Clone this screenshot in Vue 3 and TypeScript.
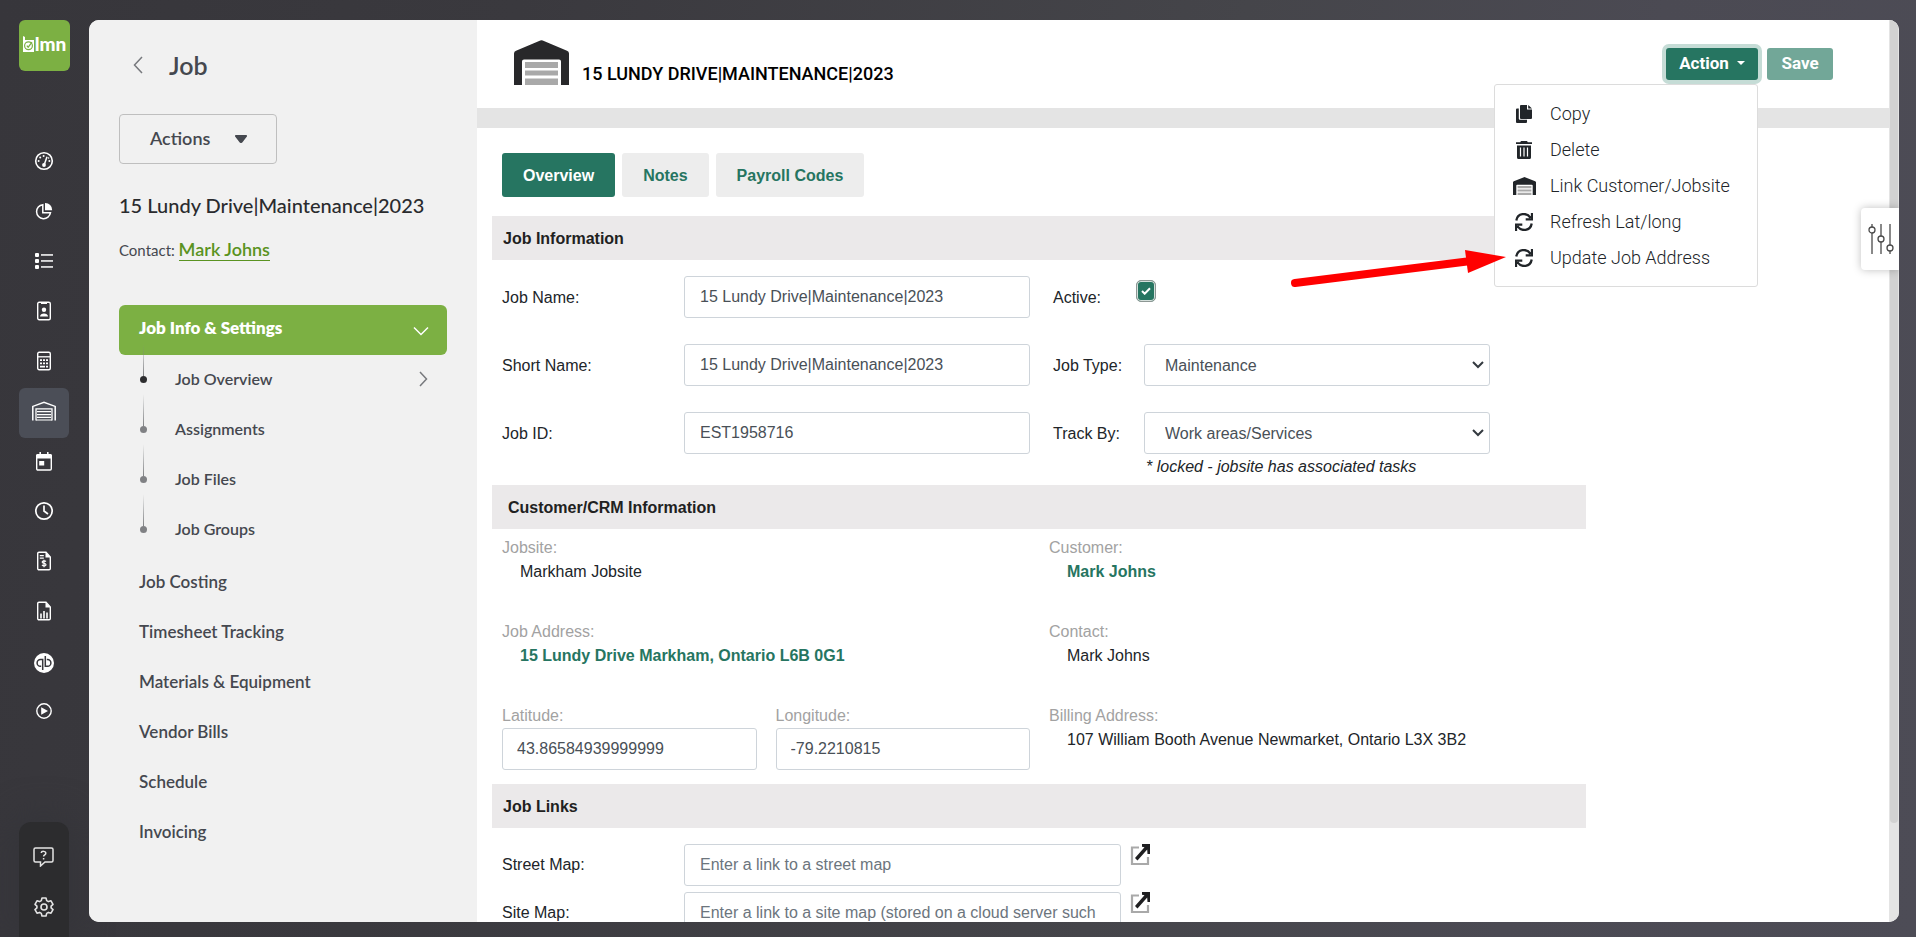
<script setup lang="ts">
import { ref } from 'vue'

type NavIcon =
  | 'gauge' | 'pie' | 'list' | 'badge' | 'calc' | 'barn'
  | 'calendar' | 'clock' | 'bill' | 'report' | 'qb' | 'play'

const navItems: { icon: NavIcon; label: string }[] = [
  { icon: 'gauge', label: 'Dashboard' },
  { icon: 'pie', label: 'Budgets' },
  { icon: 'list', label: 'Lists' },
  { icon: 'badge', label: 'Contacts' },
  { icon: 'calc', label: 'Estimates' },
  { icon: 'barn', label: 'Jobs' },
  { icon: 'calendar', label: 'Calendar' },
  { icon: 'clock', label: 'Timesheets' },
  { icon: 'bill', label: 'Invoices' },
  { icon: 'report', label: 'Reports' },
  { icon: 'qb', label: 'QuickBooks' },
  { icon: 'play', label: 'Videos' },
]

const subItems = ['Job Overview', 'Assignments', 'Job Files', 'Job Groups']
const sections = ['Job Costing', 'Timesheet Tracking', 'Materials & Equipment', 'Vendor Bills', 'Schedule', 'Invoicing']
const tabs = ['Overview', 'Notes', 'Payroll Codes']

type MenuIcon = 'copy' | 'trash' | 'barn' | 'sync'
const menuItems: { icon: MenuIcon; label: string }[] = [
  { icon: 'copy', label: 'Copy' },
  { icon: 'trash', label: 'Delete' },
  { icon: 'barn', label: 'Link Customer/Jobsite' },
  { icon: 'sync', label: 'Refresh Lat/long' },
  { icon: 'sync', label: 'Update Job Address' },
]

const jobName = ref('15 Lundy Drive|Maintenance|2023')
const shortName = ref('15 Lundy Drive|Maintenance|2023')
const jobId = ref('EST1958716')
const active = ref(true)
const jobType = ref('Maintenance')
const trackBy = ref('Work areas/Services')
const latitude = ref('43.86584939999999')
const longitude = ref('-79.2210815')
const streetMap = ref('')
const siteMap = ref('')
</script>

<template>
  <div class="page">
    <nav class="rail" aria-label="Main">
      <a class="logo" href="#" aria-label="LMN home">
        <svg class="logo-mark" width="11" height="16" viewBox="0 0 11 16">
          <path d="M0 0l2 1v3h9v12H0z" fill="#fff" />
          <circle cx="5.500" cy="9.800" r="3.900" fill="none" stroke="#7cb043" stroke-width="1.200" />
          <path d="M3.800 9.600l1.400 1.600 3.800-5" fill="none" stroke="#7cb043" stroke-width="1.200" />
        </svg>
        <span>lmn</span>
      </a>

      <div class="nav-list">
        <a v-for="n in navItems" :key="n.icon" class="nav-item" :class="{ on: n.icon === 'barn' }" href="#" :aria-label="n.label">
          <svg v-if="n.icon === 'gauge'" width="20" height="20" viewBox="0 0 20 20" fill="none" stroke="#fff">
            <circle cx="10" cy="10" r="8.300" stroke-width="1.600" />
            <path d="M10.300 13.500L13 5.800" stroke-width="1.500" />
            <circle cx="10" cy="14" r="1.900" fill="#fff" stroke="none" />
            <g fill="#fff" stroke="none"><circle cx="4.600" cy="10" r="1" /><circle cx="6.200" cy="6.500" r="1" /><circle cx="9.600" cy="5" r="1" /><circle cx="15.400" cy="10" r="1" /><circle cx="14.600" cy="7" r=".8" /></g>
          </svg>
          <svg v-else-if="n.icon === 'pie'" width="18" height="18" viewBox="0 0 18 18">
            <path d="M10 1a7 7 0 0 1 7.200 7.300H10z" fill="#fff" />
            <path d="M7.800 2.700a7 7 0 1 0 7.700 8H7.800z" fill="none" stroke="#fff" stroke-width="1.500" />
          </svg>
          <svg v-else-if="n.icon === 'list'" width="18" height="16" viewBox="0 0 18 16" fill="#fff">
            <rect width="4" height="4" rx="1" /><rect y="6" width="4" height="4" rx="1" /><rect y="12" width="4" height="4" rx="1" />
            <rect x="6" y="1.200" width="12" height="1.500" /><rect x="6" y="7.200" width="12" height="1.500" /><rect x="6" y="13.200" width="12" height="1.500" />
          </svg>
          <svg v-else-if="n.icon === 'badge'" width="14" height="20" viewBox="0 0 14 20">
            <rect x=".7" y="1.200" width="12.600" height="17.600" rx="1.500" fill="none" stroke="#fff" stroke-width="1.400" />
            <path d="M4 1h6v2H4z" fill="#fff" />
            <circle cx="7" cy="8.700" r="2.200" fill="#fff" /><path d="M3 15.500c0-4 8-4 8 0z" fill="#fff" />
          </svg>
          <svg v-else-if="n.icon === 'calc'" width="14" height="20" viewBox="0 0 14 20">
            <rect x=".7" y="1.200" width="12.600" height="17.600" rx="1.500" fill="none" stroke="#fff" stroke-width="1.400" />
            <path d="M1 5.800h12" stroke="#fff" stroke-width="1.300" />
            <path d="M3 9.200h8M3 12.300h8" stroke="#fff" stroke-width="1.800" stroke-dasharray="2 1" />
            <path d="M3 15.600h5M9 15.600h2" stroke="#fff" stroke-width="1.800" />
          </svg>
          <svg v-else-if="n.icon === 'barn'" width="24" height="20" viewBox="0 0 24 20" fill="none" stroke="#fff" stroke-width="1.500">
            <path d="M.8 19.500V5.400L12 1.200l11.200 4.200v14.100" /><path d="M4 19.500V7.800h16v11.700" stroke-width="1.300" />
            <path d="M5 10.700h14M5 13.600h14M5 16.300h14M4 19h16" stroke-width="1.200" />
          </svg>
          <svg v-else-if="n.icon === 'calendar'" width="16" height="20" viewBox="0 0 16 20">
            <path d="M4.200 1v3M11.800 1v3" stroke="#fff" stroke-width="1.500" /><path d="M0 4.500A1.500 1.500 0 0 1 1.500 3h13A1.500 1.500 0 0 1 16 4.500V7.500H0z" fill="#fff" />
            <rect x=".7" y="4" width="14.600" height="15" rx="1.200" fill="none" stroke="#fff" stroke-width="1.400" />
            <rect x="3.200" y="10" width="5" height="4.500" fill="#fff" />
          </svg>
          <svg v-else-if="n.icon === 'clock'" width="20" height="20" viewBox="0 0 20 20" fill="none" stroke="#fff" stroke-width="1.700">
            <circle cx="10" cy="10" r="8.200" /><path d="M10 4.500V10l4 3" />
          </svg>
          <svg v-else-if="n.icon === 'bill'" width="14" height="20" viewBox="0 0 14 20">
            <path d="M2 1.200h7L13.300 6v11.500a1.300 1.300 0 0 1-1.300 1.300H2A1.300 1.300 0 0 1 .7 17.500v-15A1.300 1.300 0 0 1 2 1.200z" fill="none" stroke="#fff" stroke-width="1.400" />
            <path d="M8.500 1L13.500 6.500h-5zM2.800 4h4v1.200h-4zM2.800 6.500h4v1.200h-4z" fill="#fff" />
            <path d="M9 10.500c-1-1.200-4-.8-3.800.8.200 1.400 3.800.8 3.800 2.400 0 1.500-3 1.500-4 .2M7 8.800v7.400" fill="none" stroke="#fff" stroke-width="1.200" />
          </svg>
          <svg v-else-if="n.icon === 'report'" width="14" height="20" viewBox="0 0 14 20">
            <path d="M2 1.200h7L13.300 6v11.500a1.300 1.300 0 0 1-1.300 1.300H2A1.300 1.300 0 0 1 .7 17.500v-15A1.300 1.300 0 0 1 2 1.200z" fill="none" stroke="#fff" stroke-width="1.400" />
            <path d="M8.500 1L13.500 6.500h-5z" fill="#fff" />
            <path d="M4 12.500v5M7 10v7.500M10 11.500v6" stroke="#fff" stroke-width="1.600" />
          </svg>
          <svg v-else-if="n.icon === 'qb'" width="20" height="24" viewBox="0 0 20 24">
            <circle cx="10" cy="14" r="10" fill="#fff" />
            <g fill="none" stroke="#37363b" stroke-width="1.500"><path d="M8.700 21V10.500H6.500a3.400 3.400 0 0 0 0 6.800h.7" /><path d="M11.300 7v10.300h2.200a3.400 3.400 0 0 0 0-6.800h-.7" /></g>
          </svg>
          <svg v-else width="16" height="16" viewBox="0 0 16 16">
            <circle cx="8" cy="8" r="7.200" fill="none" stroke="#fff" stroke-width="1.400" /><path d="M5.200 4.200L12 8l-6.800 3.800z" fill="#fff" />
          </svg>
        </a>
      </div>

      <div class="rail-foot">
        <a href="#" aria-label="Help">
          <svg width="22" height="20" viewBox="0 0 22 20" fill="none" stroke="#e4e4e4" stroke-width="1.500">
            <path d="M2.500 1h16A1.500 1.500 0 0 1 20 2.500v11a1.500 1.500 0 0 1-1.500 1.500H12l-4.500 4V15h-5A1.500 1.500 0 0 1 1 13.500v-11A1.500 1.500 0 0 1 2.500 1z" />
            <path d="M8.200 6c.2-2.200 4.600-2.200 4.600.2 0 1.600-2.200 1.600-2.200 3.300M10.600 11v1.500" />
          </svg>
        </a>
        <a href="#" aria-label="Settings">
          <svg width="20" height="20" viewBox="0 0 20 20" fill="none" stroke="#e4e4e4" stroke-width="1.600" stroke-linejoin="round">
            <path d="M8 1h4l.7 2.600 1.700 1 2.600-.8 2 3.500-1.900 1.800v1.800L19 12.700l-2 3.500-2.600-.8-1.700 1L12 19H8l-.7-2.600-1.700-1-2.600.8-2-3.500 1.900-1.800V9.100L1 7.300l2-3.500 2.600.8 1.700-1z" />
            <circle cx="10" cy="10" r="3" />
          </svg>
        </a>
      </div>
    </nav>

    <div class="shell">
      <aside class="side">
        <header class="side-head">
          <a href="#" aria-label="Back">
            <svg width="10" height="18" viewBox="0 0 10 18"><path d="M9 1L1.500 9 9 17" fill="none" stroke="#77797d" stroke-width="1.500" /></svg>
          </a>
          <h1>Job</h1>
        </header>
        <button class="actions" type="button">
          Actions
          <svg width="12" height="8" viewBox="0 0 12 8"><path d="M1 0h10a1 1 0 0 1 .9 1.600L7.500 7.200a2 2 0 0 1-3 0L.1 1.600A1 1 0 0 1 1 0z" fill="#45484f" /></svg>
        </button>
        <h2 class="job-title">15 Lundy Drive|Maintenance|2023</h2>
        <p class="contact">Contact: <a href="#">Mark Johns</a></p>

        <button class="group" type="button" aria-expanded="true">
          Job Info &amp; Settings
          <svg width="16" height="10" viewBox="0 0 16 10"><path d="M1 1.500L8 8.500l7-7" fill="none" stroke="#fff" stroke-width="1.500" /></svg>
        </button>
        <ul class="subs">
          <li v-for="(s, i) in subItems" :key="s">
            <a href="#" :class="{ current: i === 0 }">
              <span class="dot"></span>
              <span class="sub-label">{{ s }}</span>
              <svg v-if="i === 0" width="9" height="16" viewBox="0 0 9 16"><path d="M1 1l6.500 7L1 15" fill="none" stroke="#77797d" stroke-width="1.500" /></svg>
            </a>
          </li>
        </ul>
        <ul class="sections">
          <li v-for="s in sections" :key="s"><a href="#">{{ s }}</a></li>
        </ul>
      </aside>

      <main class="main">
        <header class="head">
          <svg width="55" height="45" viewBox="0 0 55 45">
            <path d="M0 45V13.500a3 3 0 0 1 2-2.800L26.300.4a3 3 0 0 1 2.400 0L53 10.700a3 3 0 0 1 2 2.800V45h-8V21.500a2 2 0 0 0-2-2H10a2 2 0 0 0-2 2V45z" fill="#28282a" />
            <path d="M11 22h33v6H11zM11 30.500h33v5H11zM11 38.500h33V45H11z" fill="#a9a9a9" />
          </svg>
          <h2>15 LUNDY DRIVE|MAINTENANCE|2023</h2>
          <div class="head-buttons">
            <div class="dropdown">
              <button class="action" type="button" aria-haspopup="true" aria-expanded="true">Action <span class="caret"></span></button>
              <div class="menu">
                <button v-for="m in menuItems" :key="m.label" type="button">
                  <span class="menu-icon">
                    <svg v-if="m.icon === 'copy'" width="16" height="18" viewBox="0 0 16 18" fill="#212529">
                      <path d="M0 4.500A1 1 0 0 1 1 3.500h1.800v10.200a1 1 0 0 0 1 1H11V17a1 1 0 0 1-1 1H1a1 1 0 0 1-1-1z" /><path d="M5 0h6v4.500h5V13a1 1 0 0 1-1 1H5a1 1 0 0 1-1-1V1a1 1 0 0 1 1-1z" /><path d="M12.200 0L16 3.500h-3.800z" />
                    </svg>
                    <svg v-else-if="m.icon === 'trash'" width="16" height="18" viewBox="0 0 16 18">
                      <path d="M5 0h6l.8 1.200H16v1.900H0V1.200h4.200zM1 4.500h14V16.500A1.500 1.500 0 0 1 13.500 18h-11A1.500 1.500 0 0 1 1 16.500z" fill="#212529" /><path d="M4.500 6.500v9M8 6.500v9M11.500 6.500v9" stroke="#fff" stroke-width="1.200" />
                    </svg>
                    <svg v-else-if="m.icon === 'barn'" width="23" height="18" viewBox="0 0 23 18">
                      <path d="M0 18V5.500a1.200 1.200 0 0 1 .8-1.200L11 .2a1.300 1.300 0 0 1 1 0l10.200 4.100a1.200 1.200 0 0 1 .8 1.200V18h-3.300V8.500a.8.8 0 0 0-.8-.8H4.100a.8.800 0 0 0-.8.8V18z" fill="#212529" />
                      <path d="M4.600 9h13.800v2.200H4.600zM4.600 12.400h13.800v2.200H4.600zM4.600 15.800h13.800V18H4.600z" fill="#a9a9a9" />
                    </svg>
                    <svg v-else width="18" height="18" viewBox="0 0 18 18" fill="none" stroke="#212529" stroke-width="2.300">
                      <path d="M1.300 7.500C2.500 0 11.500-1 15.600 4.800M17 0v6.300h-6.300" /><path d="M16.700 10.500C15.500 18 6.500 19 2.400 13.200M1 18v-6.300h6.300" />
                    </svg>
                  </span>
                  {{ m.label }}
                </button>
              </div>
              <svg class="pointer" width="220" height="42" viewBox="0 0 220 42">
                <path d="M8 35L184 13" stroke="#f00" stroke-width="8" stroke-linecap="round" /><path d="M178 2l41 7-38 16z" fill="#f00" />
              </svg>
            </div>
            <button class="save" type="button">Save</button>
          </div>
        </header>

        <div class="body">
          <div class="tabs" role="tablist">
            <button v-for="(t, i) in tabs" :key="t" type="button" role="tab" :aria-selected="i === 0" :class="{ on: i === 0 }">{{ t }}</button>
          </div>

          <h3 class="bar">Job Information</h3>
          <div class="info">
            <label for="job-name">Job Name:</label>
            <input id="job-name" v-model="jobName" class="field" type="text" />
            <label for="active">Active:</label>
            <span class="check">
              <input id="active" v-model="active" type="checkbox" />
              <svg width="10" height="8" viewBox="0 0 10 8"><path d="M1 4l2.700 2.700L9 1.200" fill="none" stroke="#fff" stroke-width="2" /></svg>
            </span>

            <label for="short-name">Short Name:</label>
            <input id="short-name" v-model="shortName" class="field" type="text" />
            <label for="job-type">Job Type:</label>
            <span class="select">
              <select id="job-type" v-model="jobType" class="field"><option>Maintenance</option></select>
              <svg width="12" height="8" viewBox="0 0 12 8"><path d="M1 1l5 5 5-5" fill="none" stroke="#343a40" stroke-width="2" /></svg>
            </span>

            <label for="job-id">Job ID:</label>
            <input id="job-id" v-model="jobId" class="field" type="text" />
            <label for="track-by">Track By:</label>
            <span class="select">
              <select id="track-by" v-model="trackBy" class="field"><option>Work areas/Services</option></select>
              <svg width="12" height="8" viewBox="0 0 12 8"><path d="M1 1l5 5 5-5" fill="none" stroke="#343a40" stroke-width="2" /></svg>
            </span>
          </div>
          <p class="note">* locked - jobsite has associated tasks</p>

          <h3 class="bar crm-bar">Customer/CRM Information</h3>
          <div class="crm">
            <dl><dt>Jobsite:</dt><dd>Markham Jobsite</dd></dl>
            <dl><dt>Customer:</dt><dd><a href="#">Mark Johns</a></dd></dl>
            <dl><dt>Job Address:</dt><dd><a href="#">15 Lundy Drive Markham, Ontario L6B 0G1</a></dd></dl>
            <dl><dt>Contact:</dt><dd>Mark Johns</dd></dl>
            <div class="coords">
              <div><label for="lat">Latitude:</label><input id="lat" v-model="latitude" class="field" type="text" /></div>
              <div><label for="lng">Longitude:</label><input id="lng" v-model="longitude" class="field" type="text" /></div>
            </div>
            <dl><dt>Billing Address:</dt><dd>107 William Booth Avenue Newmarket, Ontario L3X 3B2</dd></dl>
          </div>

          <h3 class="bar">Job Links</h3>
          <div class="links">
            <label for="street">Street Map:</label>
            <input id="street" v-model="streetMap" class="field" type="text" placeholder="Enter a link to a street map" />
            <a href="#" aria-label="Open street map">
              <svg width="22" height="22" viewBox="0 0 22 22"><path d="M9 3.500H2V20h16v-7" fill="none" stroke="#a9a9a9" stroke-width="2.200" /><path d="M12 0h8v10h-2.500l-.3-4.500L7.500 16.500 5 14 14.500 3.200 12 2.800z" fill="#1f1f21" /></svg>
            </a>
            <label for="site">Site Map:</label>
            <input id="site" v-model="siteMap" class="field" type="text" placeholder="Enter a link to a site map (stored on a cloud server such" />
            <a href="#" aria-label="Open site map">
              <svg width="22" height="22" viewBox="0 0 22 22"><path d="M9 3.500H2V20h16v-7" fill="none" stroke="#a9a9a9" stroke-width="2.200" /><path d="M12 0h8v10h-2.500l-.3-4.500L7.500 16.500 5 14 14.500 3.200 12 2.800z" fill="#1f1f21" /></svg>
            </a>
          </div>
        </div>
      </main>

      <div class="track"><div class="thumb"></div></div>
      <button class="tune" type="button" aria-label="Display options">
        <svg width="26" height="30" viewBox="0 0 26 30" fill="#fff" stroke="#4a4a4a" stroke-width="1.300">
          <path d="M4 0v30M13 0v30M22 0v30" /><circle cx="4" cy="6" r="3" /><circle cx="13" cy="15" r="3" /><circle cx="22" cy="24" r="3" />
        </svg>
      </button>
    </div>
  </div>
</template>

<style>
body { margin: 0; }
</style>

<style scoped>
* { box-sizing: border-box; }
h1, h2, h3, p, ul, dl, dd { margin: 0; padding: 0; }
ul { list-style: none; }
a { text-decoration: none; color: inherit; }
button { font: inherit; border: 0; cursor: pointer; text-align: left; }
svg { flex: none; display: block; }

.page {
  display: flex;
  height: 100vh;
  overflow: hidden;
  background: linear-gradient(100deg, #37363b 0%, #3a393e 25%, #45454a 60%, #4b4a53 80%, #4d4c56 100%);
  font: 16px/24px "Liberation Sans", Arial, sans-serif;
  color: #212529;
}

/* icon rail */
.rail { width: 89px; flex: none; display: flex; flex-direction: column; padding: 20px 0 0 19px; }
.logo {
  width: 51px; height: 51px; border-radius: 6px; background: #7cb043; color: #fff;
  display: flex; align-items: center; justify-content: center; gap: 1px; padding-bottom: 3px;
  font: 900 19px/24px Lato, sans-serif;
}
.nav-list { margin-top: 67px; }
.nav-item {
  width: 50px; height: 50px; border-radius: 6px; padding-bottom: 4px;
  display: flex; align-items: center; justify-content: center;
}
.nav-item.on { background: #4b4e57; }
.rail-foot { margin-top: auto; width: 50px; height: 115px; border-radius: 12px 12px 0 0; background: #2c2c2e; padding-top: 10px; box-shadow: 0 0 32px 8px #35353a; }
.rail-foot a { height: 50px; display: flex; align-items: center; justify-content: center; }

/* shell */
.shell { flex: 1; min-width: 0; margin: 20px 17px 15px 0; display: flex; position: relative; border-radius: 10px; overflow: hidden; background: #fff; }

/* job side panel */
.side { width: 388px; flex: none; background: #f1f1f1; padding: 29px 30px 0; font-family: Lato, sans-serif; color: #45484f; }
.side-head { display: flex; align-items: center; gap: 26px; height: 32px; padding-left: 14px; }
.side-head h1 { font-size: 25px; line-height: 32px; font-weight: 600; }
.actions {
  margin-top: 33px; width: 158px; height: 50px; padding: 0 29px 2px 30px; background: none;
  border: 1px solid #bfbfbf; border-radius: 4px; display: flex; align-items: center; justify-content: space-between;
  font-size: 18px; font-weight: 600; color: #45484f;
}
.actions svg { margin-top: 2px; }
.job-title { margin-top: 29px; font-size: 20px; line-height: 24px; font-weight: 500; color: #2a2b2e; white-space: nowrap; }
.contact { margin-top: 20px; font-size: 15px; line-height: 24px; }
.contact a { font-size: 18px; font-weight: 600; color: #5a9321; border-bottom: 1px solid #5a9321; }
.group {
  margin-top: 43px; width: 100%; height: 50px; border-radius: 6px; background: #7cb043; color: #fff;
  padding: 0 18px 4px 20px; display: flex; align-items: center; justify-content: space-between;
  font-size: 17px; font-weight: 800;
}
.group svg { margin-top: 6px; }
.subs a { height: 50px; display: flex; align-items: center; padding: 0 19px 2px 21px; font-size: 16px; font-weight: 600; }
.dot { width: 7px; height: 7px; border-radius: 50%; background: #808184; position: relative; }
.dot::before { content: ""; position: absolute; left: 3px; bottom: 7px; width: 1px; height: 32px; background: linear-gradient(transparent, #808184); }
.current .dot { background: #2d2d2f; }
.sub-label { flex: 1; padding-left: 28px; }
.sections { padding-top: 2px; }
.sections a { height: 50px; display: flex; align-items: center; padding-left: 20px; font-size: 17px; font-weight: 600; }

/* main area */
.main { flex: 1; min-width: 0; overflow: hidden; }
.head { height: 88px; padding: 0 56px 1px 37px; display: flex; align-items: center; }
.head > svg { margin-bottom: 3px; }
.head h2 { margin-left: 13px; padding-top: 20px; font: 500 18px/24px Roboto, sans-serif; color: #000; white-space: nowrap; }
.head-buttons { margin-left: auto; padding-bottom: 1px; height: 32px; margin-bottom: 0; display: flex; gap: 9px; font-family: Roboto, sans-serif; }
.dropdown { position: relative; }
.action, .save { height: 32px; border-radius: 3px; color: #fff; font-size: 17px; font-weight: 700; text-align: center; }
.action { width: 92px; padding: 0 0 2px; background: #267561; box-shadow: 0 0 0 4px #c5dcd6; display: flex; align-items: center; justify-content: center; gap: 8px; }
.save { width: 66px; padding: 0 0 2px; background: #72a798; }
.caret { border: 4px solid transparent; border-top-color: #fff; border-bottom: 0; }
.menu {
  position: absolute; z-index: 3; top: 36px; right: 0; width: 264px; padding: 11px 0 10px;
  background: #fff; border: 1px solid #dcdcdc; border-radius: 3px;
}
.menu button {
  width: 100%; height: 36px; padding: 0 0 0 17px; background: none; display: flex; align-items: center; gap: 14px;
  font-size: 18px; font-weight: 300; color: #212529; white-space: nowrap;
}
.menu-icon { width: 24px; display: flex; justify-content: center; }
.pointer { position: absolute; z-index: 4; top: 200px; right: 251px; }

.body { border-top: 20px solid #e4e4e4; padding: 25px 0 0 15px; }
.tabs { display: flex; gap: 7px; padding-left: 10px; }
.tabs button { height: 44px; padding: 1px 21px 0; border-radius: 3px; background: #ededed; color: #267561; font-weight: 700; }
.tabs .on { background: #267561; color: #fff; }

.bar { max-width: 1094px; height: 44px; padding-left: 11px; background: #ebe9ea; font-size: 16px; line-height: 46px; font-weight: 700; color: #212121; }
.tabs + .bar { margin-top: 19px; }
.crm-bar { padding-left: 16px; }

.field {
  width: 100%; height: 42px; border: 1px solid #ced4da; border-radius: 3px; background: #fff; padding: 0 15px;
  font: inherit; color: #495057; outline: 0;
}
.field::placeholder { color: #6c757d; opacity: 1; }
.info {
  max-width: 998px; margin-top: 16px; padding-left: 10px; display: grid; row-gap: 26px; align-items: center;
  grid-template-columns: 182px minmax(0, 346px) 114px minmax(0, 346px);
}
.info label { padding-top: 2px; }
.info label:nth-of-type(even) { padding-left: 23px; }
.check { display: grid; justify-items: center; align-items: center; width: 20px; height: 22px; margin: -12px 0 0 -8px; }
.check > *, .select > * { grid-area: 1 / 1; }
.check input { appearance: none; margin: 0; width: 20px; height: 22px; border-radius: 5px; background: #267561; border: 1px solid #8d9794; box-shadow: inset 0 0 0 1px #d5e0dc; }
.check svg, .select svg { pointer-events: none; position: relative; }
.select { display: grid; align-items: center; }
.select select { appearance: none; padding: 1px 20px 0; }
.select svg { justify-self: end; margin-right: 6px; }
.note { margin-left: 654px; padding-top: 1px; font-style: italic; }
.note + .bar { margin-top: 6px; }

.crm { max-width: 1094px; padding: 7px 0 14px 10px; display: grid; grid-template-columns: 528px minmax(0, 1fr); column-gap: 19px; row-gap: 36px; }
.crm dt, .crm label { display: block; color: #a2a2a2; }
.crm dd { padding-left: 18px; }
.crm dd a { color: #267561; font-weight: 700; }
.coords { display: grid; grid-template-columns: 1fr 1fr; gap: 19px; }
.coords .field { padding: 0 14px; display: block; }

.links { margin-top: 16px; padding-left: 10px; display: grid; grid-template-columns: 182px minmax(0, 437px) 22px; row-gap: 6px; align-items: center; }
.links a { margin-left: 9px; align-self: start; }

.track { width: 10px; flex: none; background: #e4e4e4; padding: 0 1px; }
.thumb { height: 89%; border-radius: 0 0 4px 4px; background: #d2d2d2; }
.tune {
  position: absolute; right: 0; top: 188px; width: 38px; height: 62px; padding: 0 5px 0 7px; background: #fff;
  border-radius: 4px 0 0 4px; box-shadow: 0 0 8px rgba(0, 0, 0, 0.25);
}
</style>
